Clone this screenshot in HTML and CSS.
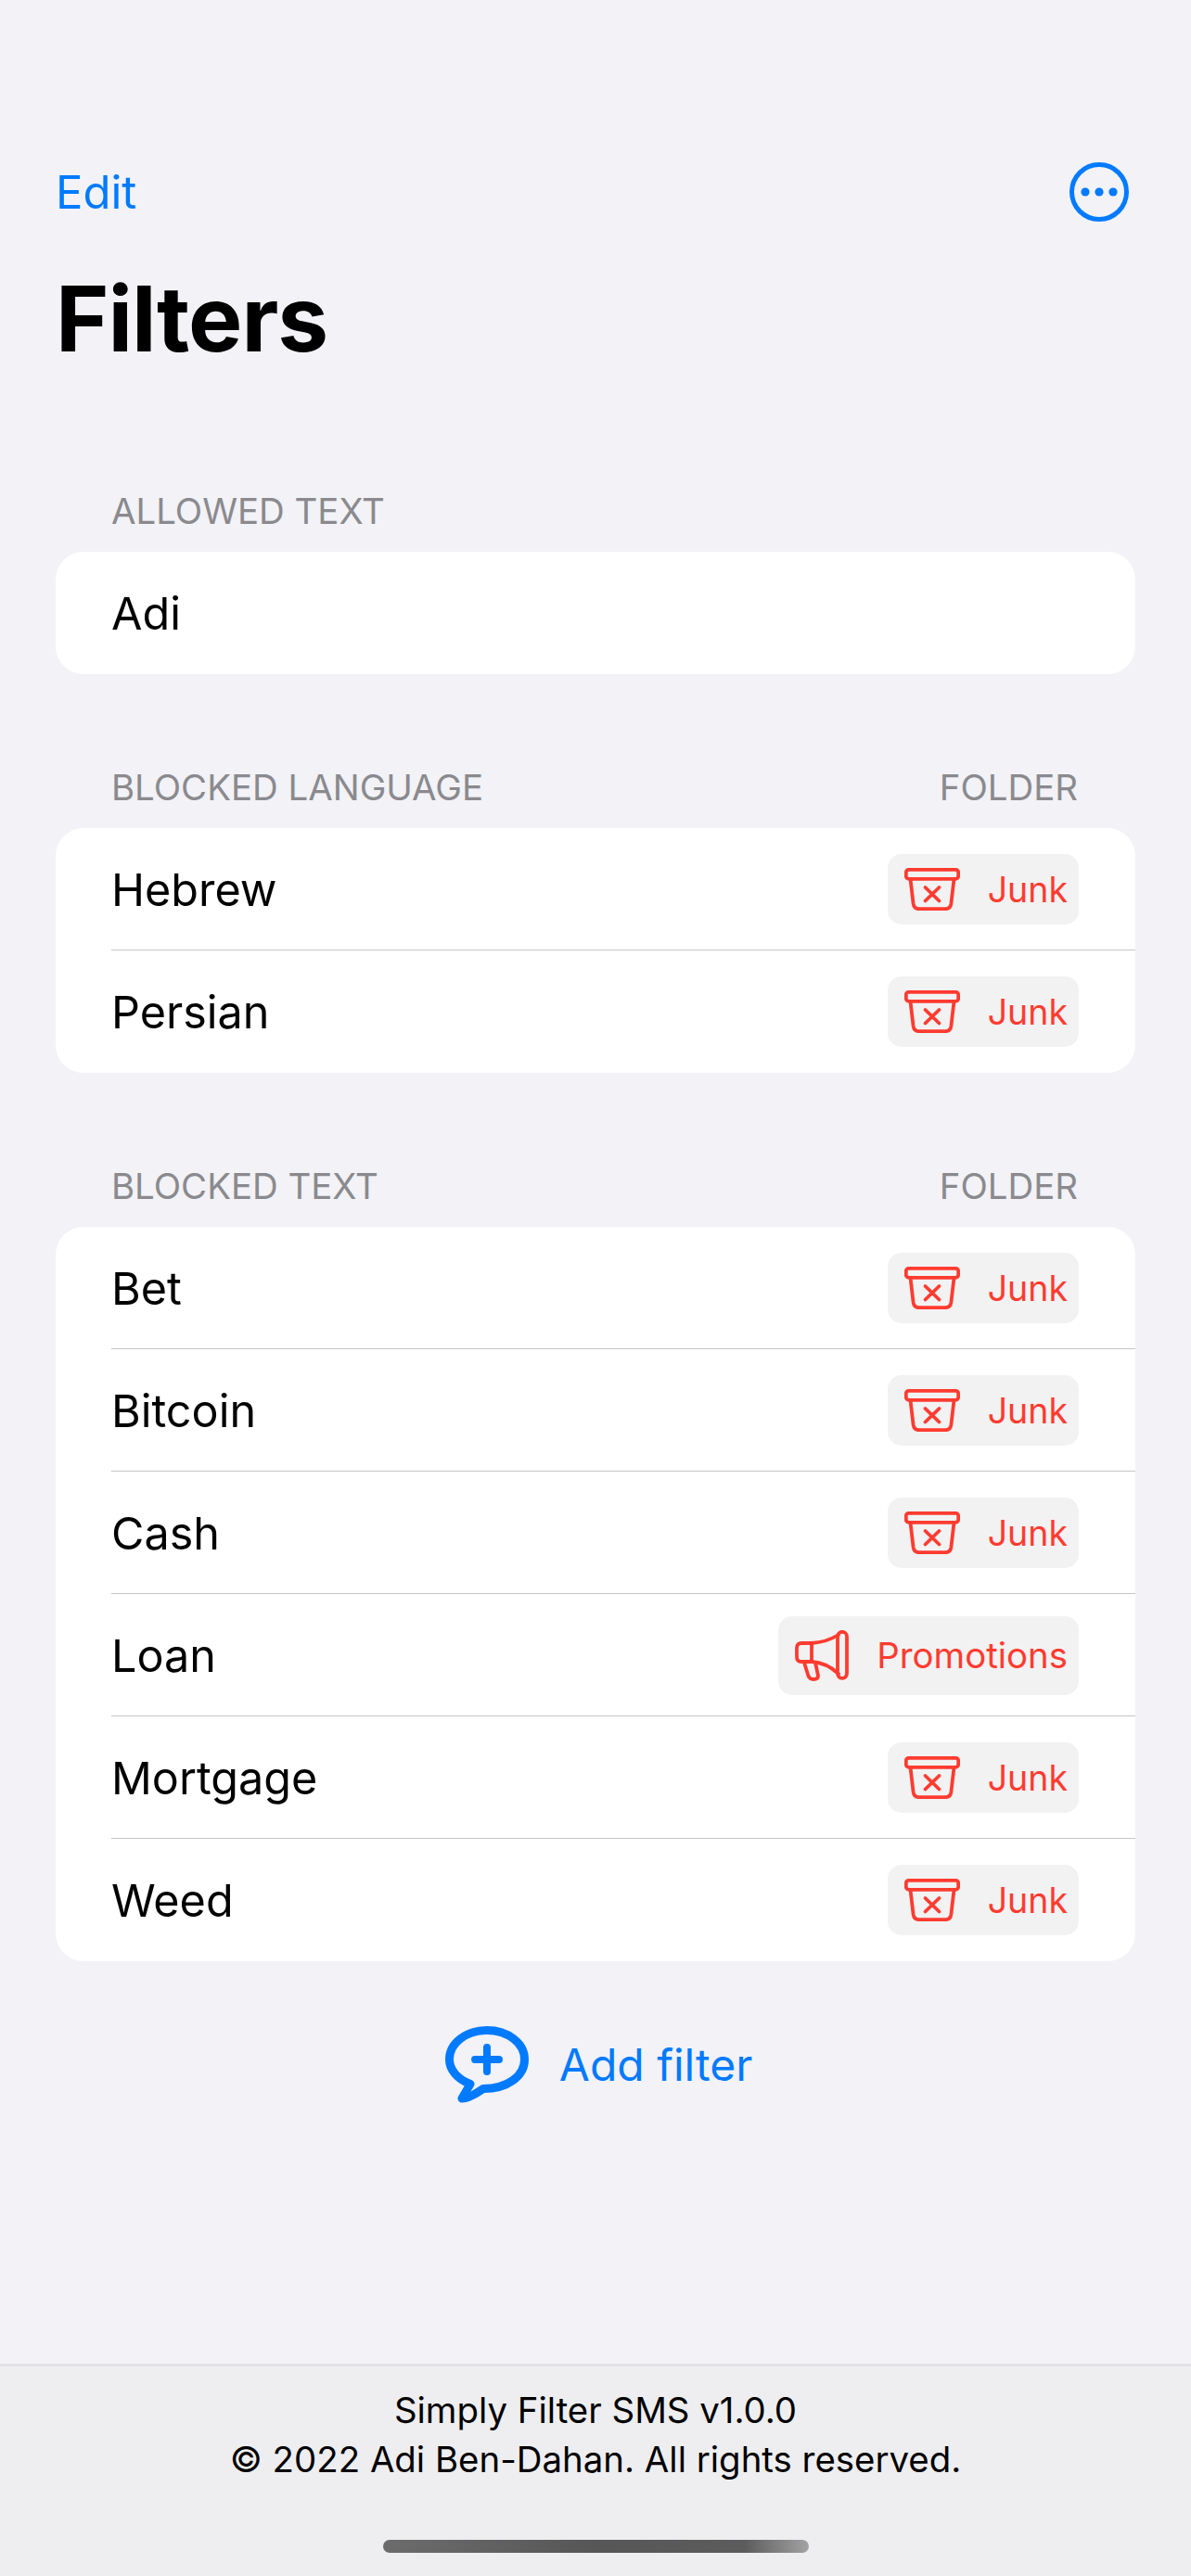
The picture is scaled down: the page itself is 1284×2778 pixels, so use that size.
FILE: index.html
```html
<!DOCTYPE html>
<html lang="en">

<head>
    <meta charset="UTF-8">
    <title>Filters</title>
    <link rel="stylesheet" href="styles.css">
</head>

<body>
    <svg class="defs" width="0" height="0">
        <symbol id="junk" viewBox="0 0 60 46">
            <rect x="1.8" y="1.8" width="56.4" height="10" rx="3"></rect>
            <path d="M6.5 12 L9.6 38.5 Q10.4 44.2 16 44.2 H44 Q49.6 44.2 50.4 38.5 L53.5 12"></path>
            <path d="M22.5 21 L37.5 35.5 M37.5 21 L22.5 35.5"></path>
        </symbol>
        <symbol id="promo" viewBox="0 0 58 55">
            <path d="M47 5 Q34 13 18 14 H7 Q2 14 2 19 V29 Q2 34 7 34 H18 Q34 35 47 47"></path>
            <rect x="46" y="1.8" width="10" height="50" rx="5"></rect>
            <path d="M18 14 V34"></path>
            <path d="M10 35 L14.5 49.5 Q16 53 20 53 Q25 53 25 49 L22 35"></path>
        </symbol>
    </svg>

    <main class="content">
        <div class="nav">
            <a class="edit">Edit</a>
            <svg class="more" viewBox="0 0 64 64">
                <circle cx="32" cy="32" r="29.5"></circle>
                <circle class="dot" cx="17" cy="32" r="4.6"></circle>
                <circle class="dot" cx="32" cy="32" r="4.6"></circle>
                <circle class="dot" cx="47" cy="32" r="4.6"></circle>
            </svg>
        </div>
        <h1>Filters</h1>

        <section>
            <div class="section-head"><span>ALLOWED TEXT</span></div>
            <div class="card">
                <div class="row">Adi</div>
            </div>
        </section>

        <section>
            <div class="section-head"><span>BLOCKED LANGUAGE</span><span>FOLDER</span></div>
            <div class="card">
                <div class="row">Hebrew
                    <span class="badge"><svg class="icon-junk"><use href="#junk"></use></svg>Junk</span>
                </div>
                <div class="row">Persian
                    <span class="badge"><svg class="icon-junk"><use href="#junk"></use></svg>Junk</span>
                </div>
            </div>
        </section>

        <section>
            <div class="section-head"><span>BLOCKED TEXT</span><span>FOLDER</span></div>
            <div class="card">
                <div class="row">Bet
                    <span class="badge"><svg class="icon-junk"><use href="#junk"></use></svg>Junk</span>
                </div>
                <div class="row">Bitcoin
                    <span class="badge"><svg class="icon-junk"><use href="#junk"></use></svg>Junk</span>
                </div>
                <div class="row">Cash
                    <span class="badge"><svg class="icon-junk"><use href="#junk"></use></svg>Junk</span>
                </div>
                <div class="row">Loan
                    <span class="badge badge-promo"><svg class="icon-promo"><use href="#promo"></use></svg>Promotions</span>
                </div>
                <div class="row">Mortgage
                    <span class="badge"><svg class="icon-junk"><use href="#junk"></use></svg>Junk</span>
                </div>
                <div class="row">Weed
                    <span class="badge"><svg class="icon-junk"><use href="#junk"></use></svg>Junk</span>
                </div>
            </div>
        </section>

        <a class="add-filter">
            <svg class="add-icon" viewBox="0 0 90 83">
                <path d="M41 67.5 C67 67.5 85.5 54 85.5 36 C85.5 18 67 4.5 45 4.5 C23 4.5 4.5 18 4.5 36 C4.5 47 13 57 27 62.5 L18 78 C25 78 33 73 41 67.5 Z"></path>
                <path d="M45 23 V49 M32 36 H58"></path>
            </svg>
            Add filter
        </a>
    </main>

    <footer class="footer">
        <div>Simply Filter SMS v1.0.0</div>
        <div>© 2022 Adi Ben-Dahan. All rights reserved.</div>
        <div class="home-bar"></div>
    </footer>
</body>

</html>
```

FILE: styles.css
```css
body {
    display: flex;
    flex-direction: column;
    width: 1284px;
    height: 2778px;
    margin: 0;
    overflow: hidden;
    background-color: #f2f2f7;
    color: #000;
    font-family: "Inter", "Liberation Sans", sans-serif;
}

.defs {
    position: absolute;
}

.content {
    flex: 1;
    padding: 175px 60px 0;
}

.nav {
    display: flex;
    align-items: center;
    justify-content: space-between;
    height: 64px;
    padding-right: 7px;
}

.edit {
    color: #007aff;
    font-size: 49px;
}

.more {
    width: 64px;
    height: 64px;
    fill: none;
    stroke: #007aff;
    stroke-width: 5;
}

.more .dot {
    fill: #007aff;
    stroke: none;
}

h1 {
    height: 120px;
    margin: 45px 0 123px;
    font-size: 98px;
    font-weight: 700;
    line-height: 120px;
    letter-spacing: -1px;
}

section + section {
    margin-top: 98px;
}

.section-head {
    display: flex;
    justify-content: space-between;
    height: 68px;
    padding: 0 62px 0 60px;
    color: #8a8a8e;
    font-size: 38.4px;
    line-height: 48px;
}

.card {
    overflow: hidden;
    border-radius: 30px;
    background-color: #fff;
}

.row {
    display: flex;
    align-items: center;
    justify-content: space-between;
    height: 132px;
    margin-left: 60px;
    padding-right: 61px;
    font-size: 48.5px;
}

.row:not(:last-child) {
    box-shadow: inset 0 -1px 0 #c6c6c8;
}

.badge {
    display: flex;
    align-items: center;
    justify-content: space-between;
    box-sizing: border-box;
    width: 206px;
    height: 76px;
    padding: 0 12px 0 18px;
    border-radius: 15px;
    background-color: #f2f2f2;
    color: #ff3b30;
    font-size: 37.5px;
}

.badge-promo {
    width: 324px;
    height: 85px;
    font-size: 38.4px;
}

.badge svg {
    fill: none;
    stroke: #ff3b30;
    stroke-width: 3.8;
    stroke-linecap: round;
    stroke-linejoin: round;
}

.icon-junk {
    width: 60px;
    height: 46px;
}

.icon-promo {
    width: 58px;
    height: 55px;
}

.add-filter {
    display: flex;
    align-items: center;
    justify-content: center;
    gap: 33px;
    margin-top: 70px;
    padding-left: 7px;
    color: #007aff;
    font-size: 48px;
}

.add-icon {
    width: 90px;
    height: 83px;
    fill: none;
    stroke: #007aff;
    stroke-width: 9;
    stroke-linecap: round;
    stroke-linejoin: round;
}

.add-icon path + path {
    stroke-width: 8;
}

.footer {
    box-sizing: border-box;
    height: 229px;
    padding-top: 21px;
    border-top: 3px solid #e2e2e5;
    background-color: #eeeef0;
    font-size: 38.4px;
    line-height: 53px;
    text-align: center;
}

.home-bar {
    width: 459px;
    height: 14px;
    margin: 60px auto 0;
    border-radius: 7px;
    background: linear-gradient(90deg, #6c6c6c, #565656 50%, #5c5c5c 85%, #a3a3a3);
}
```
